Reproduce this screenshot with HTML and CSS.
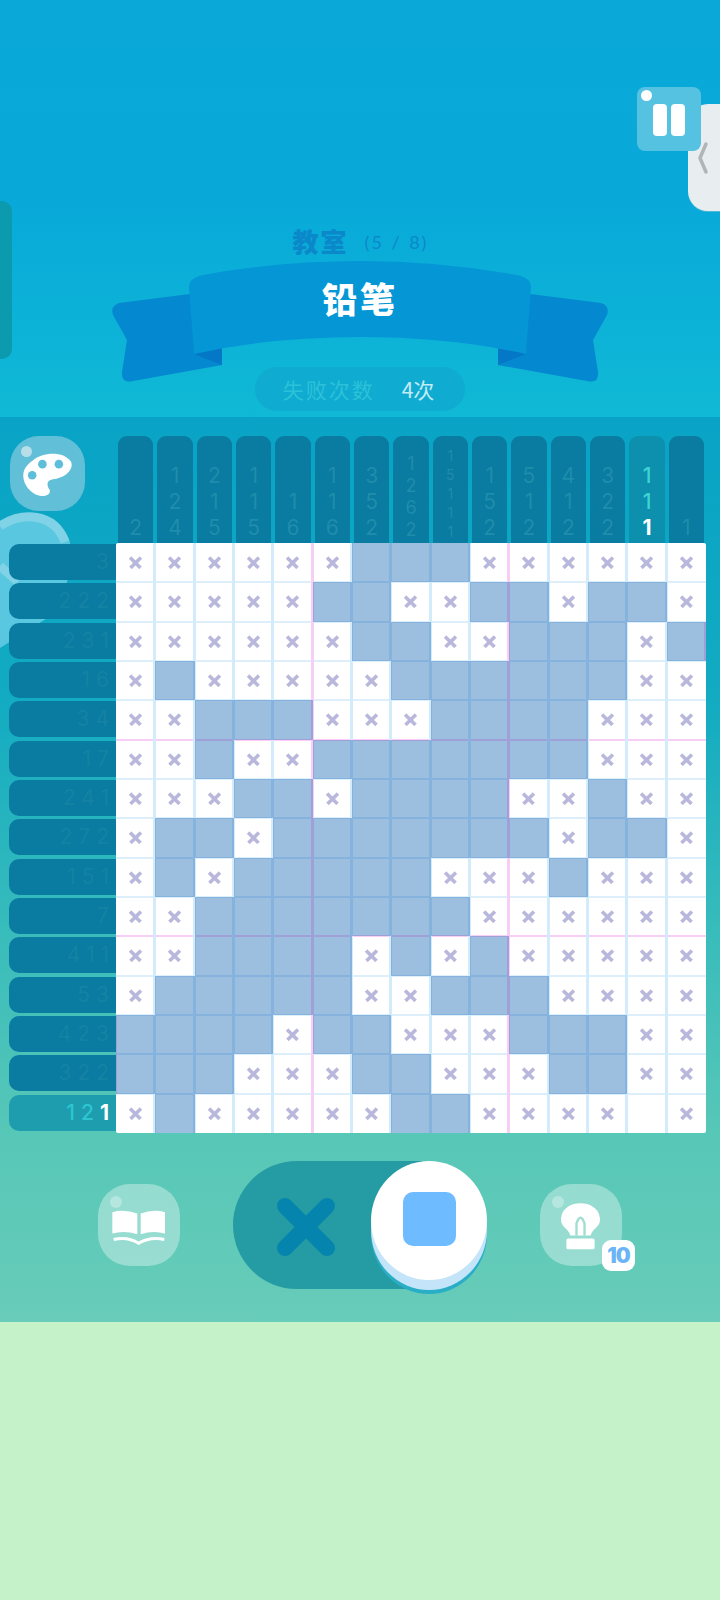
FILE: index.html
```html
<!DOCTYPE html>
<html lang="zh-CN">
<head>
<meta charset="utf-8">
<title>铅笔</title>
<link rel="stylesheet" href="styles.css">
</head>
<body>
<main class="screen">
  <header class="hero">
    <div class="side-tab"></div>
    <div class="edge-handle">
      <svg class="chevron" viewBox="0 0 12 34"><polyline points="9,3 3,17 9,31"/></svg>
    </div>
    <div class="hero-top">
      <button class="pause"><span class="dot"></span><span class="bar"></span><span class="bar"></span></button>
    </div>
    <div class="stage"><span class="stage-name">教室</span><span class="stage-count">(5 / 8)</span></div>
    <div class="ribbon">
      <svg class="ribbon-art" viewBox="110 258 500 126">
        <path class="tail" d="M119 303 L190 294 L222 346 V365 L133 381 Q121 384 122 372 L127 340 L113 315 Q110 306 119 303Z"/>
        <path class="tail" d="M601 303 L530 294 L498 346 V365 L587 381 Q599 384 598 372 L593 340 L607 315 Q610 306 601 303Z"/>
        <path class="fold" d="M194 354 L222 346 V365Z"/>
        <path class="fold" d="M526 354 L498 346 V365Z"/>
        <path class="band" d="M189 287 Q189 278 203 275 Q280 261 360 261 Q440 261 517 275 Q531 278 531 287 L526 354 Q450 337 360 337 Q270 337 194 354Z"/>
      </svg>
      <h1 class="ribbon-title">铅笔</h1>
    </div>
    <div class="fails"><span class="fails-label">失败次数</span><span class="fails-value">4次</span></div>
  </header>

  <section class="board">
    <svg class="blob" viewBox="0 0 80 150">
      <path class="blob-fill" d="M0 14 C24 -2 58 -2 70 32 L70 60 L60 100 L0 138Z"/>
      <path class="blob-ring" d="M0 16 C22 2 54 2 65 32"/>
      <path class="blob-ring" d="M0 56 L18 72"/>
    </svg>
    <div class="puzzle">
      <div class="corner">
        <button class="palette">
          <span class="dot"></span>
          <svg viewBox="60 90 170 150"><path class="palette-body" d="M100 120 C125 98 190 88 215 125 C225 150 195 175 160 178 C140 182 140 195 150 210 C155 225 135 232 120 228 C90 222 68 190 70 165 C70 145 85 130 100 120Z"/><circle class="palette-hole" cx="128" cy="132" r="13"/><circle class="palette-hole" cx="178" cy="132" r="13"/><circle class="palette-hole" cx="97" cy="166" r="13"/></svg>
        </button>
      </div>
      <div class="col-clues">
        <div class="cc"><span>2</span></div>
        <div class="cc"><span>1</span><span>2</span><span>4</span></div>
        <div class="cc"><span>2</span><span>1</span><span>5</span></div>
        <div class="cc"><span>1</span><span>1</span><span>5</span></div>
        <div class="cc"><span>1</span><span>6</span></div>
        <div class="cc"><span>1</span><span>1</span><span>6</span></div>
        <div class="cc"><span>3</span><span>5</span><span>2</span></div>
        <div class="cc d4"><span>1</span><span>2</span><span>6</span><span>2</span></div>
        <div class="cc d5"><span>1</span><span>5</span><span>1</span><span>1</span><span>1</span></div>
        <div class="cc"><span>1</span><span>5</span><span>2</span></div>
        <div class="cc"><span>5</span><span>1</span><span>2</span></div>
        <div class="cc"><span>4</span><span>1</span><span>2</span></div>
        <div class="cc"><span>3</span><span>2</span><span>2</span></div>
        <div class="cc on"><span>1</span><span>1</span><span class="done">1</span></div>
        <div class="cc"><span>1</span></div>
      </div>
      <div class="row-clues">
        <div class="rc">3</div>
        <div class="rc">222</div>
        <div class="rc">231</div>
        <div class="rc">16</div>
        <div class="rc">34</div>
        <div class="rc">17</div>
        <div class="rc">241</div>
        <div class="rc">272</div>
        <div class="rc">151</div>
        <div class="rc">7</div>
        <div class="rc">411</div>
        <div class="rc">53</div>
        <div class="rc">423</div>
        <div class="rc">322</div>
        <div class="rc on">12<b>1</b></div>
      </div>
      <div class="cells">
        <i class="x"></i><i class="x"></i><i class="x"></i><i class="x"></i><i class="x"></i><i class="x"></i><i class="f"></i><i class="f"></i><i class="f"></i><i class="x"></i><i class="x"></i><i class="x"></i><i class="x"></i><i class="x"></i><i class="x"></i>
        <i class="x"></i><i class="x"></i><i class="x"></i><i class="x"></i><i class="x"></i><i class="f"></i><i class="f"></i><i class="x"></i><i class="x"></i><i class="f"></i><i class="f"></i><i class="x"></i><i class="f"></i><i class="f"></i><i class="x"></i>
        <i class="x"></i><i class="x"></i><i class="x"></i><i class="x"></i><i class="x"></i><i class="x"></i><i class="f"></i><i class="f"></i><i class="x"></i><i class="x"></i><i class="f"></i><i class="f"></i><i class="f"></i><i class="x"></i><i class="f"></i>
        <i class="x"></i><i class="f"></i><i class="x"></i><i class="x"></i><i class="x"></i><i class="x"></i><i class="x"></i><i class="f"></i><i class="f"></i><i class="f"></i><i class="f"></i><i class="f"></i><i class="f"></i><i class="x"></i><i class="x"></i>
        <i class="x"></i><i class="x"></i><i class="f"></i><i class="f"></i><i class="f"></i><i class="x"></i><i class="x"></i><i class="x"></i><i class="f"></i><i class="f"></i><i class="f"></i><i class="f"></i><i class="x"></i><i class="x"></i><i class="x"></i>
        <i class="x"></i><i class="x"></i><i class="f"></i><i class="x"></i><i class="x"></i><i class="f"></i><i class="f"></i><i class="f"></i><i class="f"></i><i class="f"></i><i class="f"></i><i class="f"></i><i class="x"></i><i class="x"></i><i class="x"></i>
        <i class="x"></i><i class="x"></i><i class="x"></i><i class="f"></i><i class="f"></i><i class="x"></i><i class="f"></i><i class="f"></i><i class="f"></i><i class="f"></i><i class="x"></i><i class="x"></i><i class="f"></i><i class="x"></i><i class="x"></i>
        <i class="x"></i><i class="f"></i><i class="f"></i><i class="x"></i><i class="f"></i><i class="f"></i><i class="f"></i><i class="f"></i><i class="f"></i><i class="f"></i><i class="f"></i><i class="x"></i><i class="f"></i><i class="f"></i><i class="x"></i>
        <i class="x"></i><i class="f"></i><i class="x"></i><i class="f"></i><i class="f"></i><i class="f"></i><i class="f"></i><i class="f"></i><i class="x"></i><i class="x"></i><i class="x"></i><i class="f"></i><i class="x"></i><i class="x"></i><i class="x"></i>
        <i class="x"></i><i class="x"></i><i class="f"></i><i class="f"></i><i class="f"></i><i class="f"></i><i class="f"></i><i class="f"></i><i class="f"></i><i class="x"></i><i class="x"></i><i class="x"></i><i class="x"></i><i class="x"></i><i class="x"></i>
        <i class="x"></i><i class="x"></i><i class="f"></i><i class="f"></i><i class="f"></i><i class="f"></i><i class="x"></i><i class="f"></i><i class="x"></i><i class="f"></i><i class="x"></i><i class="x"></i><i class="x"></i><i class="x"></i><i class="x"></i>
        <i class="x"></i><i class="f"></i><i class="f"></i><i class="f"></i><i class="f"></i><i class="f"></i><i class="x"></i><i class="x"></i><i class="f"></i><i class="f"></i><i class="f"></i><i class="x"></i><i class="x"></i><i class="x"></i><i class="x"></i>
        <i class="f"></i><i class="f"></i><i class="f"></i><i class="f"></i><i class="x"></i><i class="f"></i><i class="f"></i><i class="x"></i><i class="x"></i><i class="x"></i><i class="f"></i><i class="f"></i><i class="f"></i><i class="x"></i><i class="x"></i>
        <i class="f"></i><i class="f"></i><i class="f"></i><i class="x"></i><i class="x"></i><i class="x"></i><i class="f"></i><i class="f"></i><i class="x"></i><i class="x"></i><i class="x"></i><i class="f"></i><i class="f"></i><i class="x"></i><i class="x"></i>
        <i class="x"></i><i class="f"></i><i class="x"></i><i class="x"></i><i class="x"></i><i class="x"></i><i class="x"></i><i class="f"></i><i class="f"></i><i class="x"></i><i class="x"></i><i class="x"></i><i class="x"></i><i class="e"></i><i class="x"></i>
      </div>
    </div>
  </section>

  <footer class="controls">
    <button class="tool">
      <span class="dot"></span>
      <svg class="book" viewBox="60 105 180 125">
        <path class="ink" d="M70 126 Q105 116 145 130 V192 Q105 180 70 190Z"/>
        <path class="ink" d="M228 126 Q193 116 155 130 V192 Q193 180 228 190Z"/>
        <path class="line" d="M74 208 Q115 198 149 219 Q185 198 226 208"/>
      </svg>
    </button>
    <div class="toggle">
      <svg class="cross" viewBox="0 0 58 58"><path d="M8 8 L50 50 M50 8 L8 50"/></svg>
      <div class="knob"><span class="square"></span></div>
    </div>
    <button class="tool">
      <span class="dot"></span>
      <svg class="bulb" viewBox="85 90 140 155">
        <path class="ink" d="M125 196 C118 172 95 172 97 145 C100 112 130 100 155 100 C180 100 210 112 213 145 C215 172 192 172 185 196Z"/>
        <path class="arch" d="M143 196 V160 Q155 126 167 160 V196"/>
        <rect class="ink" x="113" y="205" width="84" height="32" rx="5"/>
      </svg>
      <span class="badge">10</span>
    </button>
  </footer>

  <div class="pale"></div>
</main>
</body>
</html>
```

FILE: styles.css
```css
* { box-sizing: border-box; }
html, body { margin: 0; padding: 0; }
body { background: #c5f2c9; font-family: "Noto Sans CJK SC", "Noto Sans", sans-serif; }
button { border: 0; padding: 0; margin: 0; font: inherit; }

.screen { width: 720px; height: 1600px; display: flex; flex-direction: column; overflow: hidden; }

/* hero */
.hero { position: relative; height: 417px; flex: none; padding-top: 87px; background: linear-gradient(#09a8d9 0, #08a9d9 200px, #10b9d5 417px); }
.side-tab { position: absolute; left: 0; top: 201px; width: 12px; height: 158px; border-radius: 0 10px 10px 0; background: #0c9bae; }
.edge-handle { position: absolute; right: 0; top: 104px; width: 32px; height: 107px; background: #e8edf0; border-radius: 20px 0 0 20px; box-shadow: 0 1px 0 #4db8d8; display: flex; align-items: center; padding-left: 9px; }
.chevron { width: 12px; height: 34px; fill: none; stroke: #b0b5b8; stroke-width: 3.5; stroke-linecap: round; stroke-linejoin: round; }
.hero-top { display: flex; justify-content: flex-end; padding-right: 19px; height: 64px; }
.pause { position: relative; width: 64px; height: 64px; border-radius: 8px; background: #56c2e2; display: flex; justify-content: center; gap: 4px; padding: 17px 0 15px 0; }
.pause .dot { position: absolute; left: 4px; top: 3px; width: 11px; height: 11px; border-radius: 50%; background: #fff; }
.bar { width: 14px; height: 32px; border-radius: 4px; background: #fff; }
.stage { margin-top: 72px; height: 35px; display: flex; align-items: center; justify-content: center; gap: 16px; color: #0a88ca; padding-left: 1px; }
.stage-name { font-size: 26px; font-weight: 900; letter-spacing: 2px; line-height: 35px; }
.stage-count { font-size: 18px; font-family: "Lato", sans-serif; line-height: 35px; letter-spacing: 2px; word-spacing: 1px; padding-top: 3px; }
.ribbon { position: relative; height: 126px; }
.ribbon-art { position: absolute; left: 110px; top: 0; width: 500px; height: 126px; }
.tail { fill: #0488cf; }
.fold { fill: #0478c6; }
.band { fill: #0596d6; }
.ribbon-title { position: relative; margin: 0; padding-top: 15px; text-align: center; color: #fff; font-size: 35px; font-weight: 900; letter-spacing: 3px; line-height: 50px; }
.fails { width: 210px; height: 44px; margin: -17px auto 0; position: relative; border-radius: 22px; background: #10abd1; display: flex; align-items: center; justify-content: center; gap: 27px; font-size: 21px; padding-right: 3px; }
.fails-label { color: #2bc2d9; letter-spacing: 2px; }
.fails-value { color: #c4ecf5; }

/* board */
.board { position: relative; flex: none; height: 716px; padding: 19px 14px 0 9px; background: linear-gradient(#08a3c6 0, #12abc2 280px, #39bcbb 520px, #57c7b7 716px); }
.blob { position: absolute; left: 0; top: 93px; width: 80px; height: 150px; }
.blob-fill { fill: #58c7df; }
.blob-ring { fill: none; stroke: #80d2e6; stroke-width: 9; }
.puzzle { position: relative; display: grid; grid-template-columns: 107px 590px; grid-template-rows: 107px 590px; }
.corner { padding-left: 1px; }
.palette { position: relative; display: block; width: 75px; height: 75px; border-radius: 29px; background: #62bfd8; }
.palette .dot { position: absolute; left: 11px; top: 10px; width: 11px; height: 11px; border-radius: 50%; background: #b8dfe9; }
.palette svg { position: absolute; left: 10px; top: 14px; width: 56px; height: 50px; }
.palette-body { fill: #fff; }
.palette-hole { fill: #5fbfda; }

.col-clues { display: grid; grid-template-columns: repeat(15, 1fr); }
.cc { margin: 0 2px; border-radius: 9px 9px 0 0; background: #0a7ba1; display: flex; flex-direction: column; justify-content: flex-end; align-items: center; padding-bottom: 2px; color: #1f8dab; font-family: "Inter", sans-serif; font-size: 21px; line-height: 26px; }
.cc.d4 { font-size: 18px; line-height: 22px; }
.cc.d5 { font-size: 14px; line-height: 19px; }
.cc.on { background: #0c90ae; color: #3fd3d3; font-weight: 500; }
.cc .done { color: #fff; font-weight: 700; }

.row-clues { display: grid; grid-template-rows: repeat(15, 1fr); }
.rc { height: 36px; margin-top: 1px; border-radius: 10px 0 0 10px; background: #0a7ba1; color: #1483a3; font-family: "Inter", sans-serif; font-size: 21px; line-height: 36px; letter-spacing: 6px; text-align: right; padding-right: 1px; }
.rc.on { background: #1e9dae; color: #2cc5d0; font-weight: 500; }
.rc b { color: #fff; font-weight: 700; }

.cells { display: grid; grid-template-columns: repeat(15, 1fr); grid-template-rows: repeat(15, 1fr); border-radius: 2px; overflow: hidden; }
.cells i {
  --r: #d3ecfb; --l: #d3ecfb; --b: #dceffb; --t: #dceffb;
  display: grid; place-items: center; background: #fff;
  box-shadow: inset -2px 0 var(--r), inset 1px 0 var(--l), inset 0 -1px var(--b), inset 0 1px var(--t);
}
.cells i.f { background: #9dbfdf; --r: #86b3de; --l: #86b3de; --b: #86b3de; --t: #86b3de; }
/* heavy guide lines every fifth column and row */
.cells i:nth-child(5n) { --r: #f8cdf6; }
.cells i:nth-child(5n+1) { --l: #f8cdf6; }
.cells i.f:nth-child(5n) { --r: #a09fd8; }
.cells i.f:nth-child(5n+1) { --l: #a09fd8; }
.cells i:nth-child(n+61):nth-child(-n+75), .cells i:nth-child(n+136):nth-child(-n+150) { --b: #f8cdf6; }
.cells i:nth-child(n+76):nth-child(-n+90), .cells i:nth-child(n+151):nth-child(-n+165) { --t: #f8cdf6; }
.cells i.f:nth-child(n+61):nth-child(-n+75), .cells i.f:nth-child(n+136):nth-child(-n+150) { --b: #a09fd8; }
.cells i.f:nth-child(n+76):nth-child(-n+90), .cells i.f:nth-child(n+151):nth-child(-n+165) { --t: #a09fd8; }
/* no lines on the outer edges of the board */
.cells i:nth-child(15n) { --r: transparent; }
.cells i:nth-child(15n+1) { --l: transparent; }
.cells i:nth-child(-n+15) { --t: transparent; }
.cells i:nth-child(n+211) { --b: transparent; }
.cells i.x::before { content: ""; width: 15px; height: 15px; border-radius: 2px; background: linear-gradient(#b9b8dc, #b9b8dc) center / 100% 3.6px no-repeat, linear-gradient(#b9b8dc, #b9b8dc) center / 3.6px 100% no-repeat; transform: rotate(45deg); }

/* controls */
.controls { flex: none; height: 189px; display: flex; justify-content: center; align-items: flex-start; gap: 53px; padding: 28px 0 0 0; background: linear-gradient(#57c7b7, #68ccb9); }
.tool { position: relative; margin-top: 23px; width: 82px; height: 82px; border-radius: 32px; background: rgba(255, 255, 255, 0.35); display: flex; align-items: center; justify-content: center; }
.tool .dot { position: absolute; left: 12px; top: 12px; width: 12px; height: 12px; border-radius: 50%; background: rgba(255, 255, 255, 0.3); }
.book { width: 60px; height: 42px; margin-top: 2px; }
.bulb { width: 47px; height: 52px; margin-top: 2px; margin-left: -2px; }
.ink { fill: #fff; }
.line { fill: none; stroke: #fff; stroke-width: 9; }
.arch { fill: none; stroke: #9fded0; stroke-width: 7; }
.badge { position: absolute; left: 62px; top: 56px; width: 33px; height: 31px; border-radius: 9px; background: #fff; color: #6bb5f6; font-family: "Inter", sans-serif; font-size: 21px; font-weight: 900; line-height: 31px; text-align: center; letter-spacing: -1px; }
.toggle { position: relative; width: 254px; height: 128px; border-radius: 64px; background: #259ca3; display: flex; align-items: center; padding-left: 44px; }
.cross { width: 58px; height: 58px; margin-top: 3px; fill: none; stroke: #0585ad; stroke-width: 16; stroke-linecap: round; }
.knob { position: absolute; right: 0; top: 0; width: 116px; height: 119px; border-radius: 50%; background: #fff; box-shadow: 0 10px 0 #c4e4f9, 0 14px 0 #2aaec6; display: flex; justify-content: center; padding-top: 31px; }
.square { width: 53px; height: 54px; border-radius: 10px; background: #6fbbff; }

.pale { flex: 1; background: #c5f2c9; }
```
